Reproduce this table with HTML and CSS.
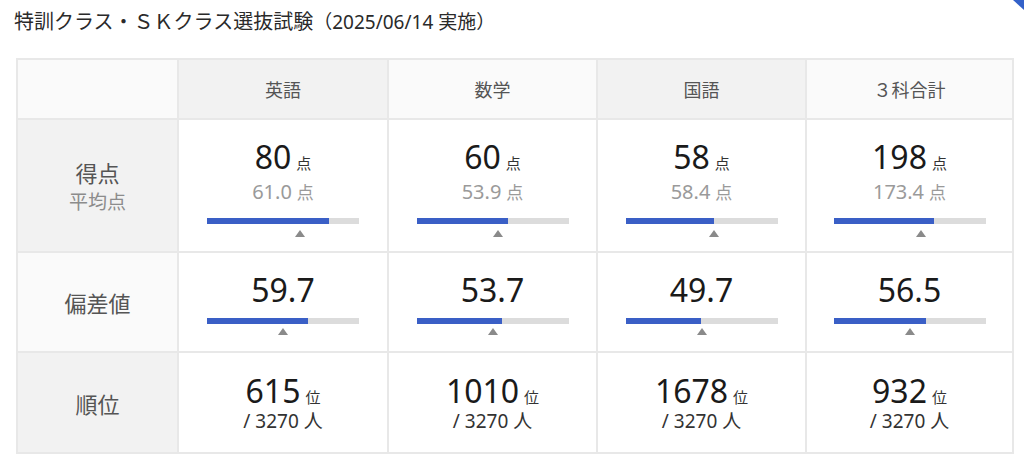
FILE: index.html
```html
<!DOCTYPE html>
<html lang="ja">
<head>
<meta charset="utf-8">
<title>選抜試験 結果</title>
<link rel="stylesheet" href="styles.css">
</head>
<body>
<div class="page">
  <svg class="corner-mark" width="12" height="12" viewBox="0 0 12 12"><polygon points="1,0 12,0 12,10" fill="#3361c9"/></svg>
  <h1 class="title">特訓クラス・ＳＫクラス選抜試験<span class="date">（2025/06/14 実施）</span></h1>
  <div class="grid">
    <div class="hd light"></div>
    <div class="hd dark">英語</div>
    <div class="hd light">数学</div>
    <div class="hd dark">国語</div>
    <div class="hd light">３科合計</div>

    <div class="lbl dark"><div class="lbl-main">得点</div><div class="lbl-sub">平均点</div></div>
    <div class="cell score">
      <div class="big">80<span class="unit">点</span></div>
      <div class="avg">61.0<span class="unit2">点</span></div>
      <div class="bar"><div class="fill" style="width:80%"></div></div>
      <div class="mk"><span class="tri" style="left:61%"></span></div>
    </div>
    <div class="cell score">
      <div class="big">60<span class="unit">点</span></div>
      <div class="avg">53.9<span class="unit2">点</span></div>
      <div class="bar"><div class="fill" style="width:60%"></div></div>
      <div class="mk"><span class="tri" style="left:53.9%"></span></div>
    </div>
    <div class="cell score">
      <div class="big">58<span class="unit">点</span></div>
      <div class="avg">58.4<span class="unit2">点</span></div>
      <div class="bar"><div class="fill" style="width:58%"></div></div>
      <div class="mk"><span class="tri" style="left:58.4%"></span></div>
    </div>
    <div class="cell score">
      <div class="big">198<span class="unit">点</span></div>
      <div class="avg">173.4<span class="unit2">点</span></div>
      <div class="bar"><div class="fill" style="width:66%"></div></div>
      <div class="mk"><span class="tri" style="left:57.8%"></span></div>
    </div>

    <div class="lbl light"><div class="lbl-main">偏差値</div></div>
    <div class="cell dev">
      <div class="big">59.7</div>
      <div class="bar"><div class="fill" style="width:66.2%"></div></div>
      <div class="mk"><span class="tri" style="left:50%"></span></div>
    </div>
    <div class="cell dev">
      <div class="big">53.7</div>
      <div class="bar"><div class="fill" style="width:56.2%"></div></div>
      <div class="mk"><span class="tri" style="left:50%"></span></div>
    </div>
    <div class="cell dev">
      <div class="big">49.7</div>
      <div class="bar"><div class="fill" style="width:49.5%"></div></div>
      <div class="mk"><span class="tri" style="left:50%"></span></div>
    </div>
    <div class="cell dev">
      <div class="big">56.5</div>
      <div class="bar"><div class="fill" style="width:60.8%"></div></div>
      <div class="mk"><span class="tri" style="left:50%"></span></div>
    </div>

    <div class="lbl dark"><div class="lbl-main">順位</div></div>
    <div class="cell rank">
      <div class="big">615<span class="unit">位</span></div>
      <div class="total">/ 3270 人</div>
    </div>
    <div class="cell rank">
      <div class="big">1010<span class="unit">位</span></div>
      <div class="total">/ 3270 人</div>
    </div>
    <div class="cell rank">
      <div class="big">1678<span class="unit">位</span></div>
      <div class="total">/ 3270 人</div>
    </div>
    <div class="cell rank">
      <div class="big">932<span class="unit">位</span></div>
      <div class="total">/ 3270 人</div>
    </div>
  </div>
</div>
</body>
</html>
```

FILE: styles.css
```css
html, body {
  margin: 0;
  padding: 0;
  background: #ffffff;
}
body {
  font-family: "Noto Sans", "Noto Sans CJK JP", sans-serif;
  color: #333333;
}
.page {
  position: relative;
  width: 1024px;
  height: 471px;
  overflow: hidden;
}
.corner-mark {
  position: absolute;
  top: 0;
  right: 0;
}
.title {
  margin: 0;
  box-sizing: border-box;
  height: 58px;
  padding: 9px 0 0 14px;
  font-size: 20px;
  line-height: 24px;
  font-weight: normal;
  color: #2a2a2a;
  font-family: "Noto Sans CJK JP", sans-serif;
}
.date {
  font-size: 19px;
  line-height: 19px;
  font-family: "Noto Sans", "Noto Sans CJK JP", sans-serif;
}
.grid {
  margin-left: 16px;
  width: 998px;
  box-sizing: border-box;
  display: grid;
  grid-template-columns: 159px 208px 207px 207px 205px;
  grid-template-rows: 58px 131px 98px 99px;
  gap: 2px;
  padding: 2px;
  background: #e8e8e8;
}
.light { background: #fafafa; }
.dark { background: #f2f2f2; }
.hd {
  display: flex;
  align-items: center;
  justify-content: center;
  font-family: "Noto Sans CJK JP", sans-serif;
  font-size: 18px;
  color: #555555;
}
.lbl {
  display: flex;
  flex-direction: column;
  align-items: center;
  justify-content: center;
  font-family: "Noto Sans CJK JP", sans-serif;
  color: #555555;
}
.lbl-main {
  font-size: 22px;
  line-height: 26px;
}
.lbl-sub {
  font-size: 19px;
  line-height: 24px;
  margin-top: 4px;
  color: #8c8c8c;
}
.cell {
  background: #ffffff;
  display: flex;
  flex-direction: column;
  align-items: center;
  text-align: center;
}
.big {
  font-size: 32px;
  line-height: 32px;
  color: #1a1a1a;
}
.unit {
  font-size: 15px;
  line-height: 15px;
  margin-left: 5px;
  color: #333333;
  font-family: "Noto Sans CJK JP", sans-serif;
}
.avg {
  margin-top: 7px;
  font-size: 20px;
  line-height: 24px;
  color: #9a9a9a;
}
.unit2 {
  font-size: 17px;
  line-height: 17px;
  margin-left: 5px;
  font-family: "Noto Sans CJK JP", sans-serif;
}
.bar {
  width: 152px;
  height: 6px;
  background: #dcdcdc;
}
.fill {
  height: 100%;
  background: #3a5fc6;
}
.mk {
  position: relative;
  width: 152px;
  height: 7px;
}
.tri {
  position: absolute;
  top: 0;
  width: 0;
  height: 0;
  margin-left: -5px;
  border-left: 5px solid transparent;
  border-right: 5px solid transparent;
  border-bottom: 7px solid #8a8a8a;
}
.score { padding-top: 21px; }
.score .bar { margin-top: 14px; }
.score .mk { margin-top: 6px; }
.dev { padding-top: 21px; }
.dev .bar { margin-top: 12px; }
.dev .mk { margin-top: 4px; }
.rank { padding-top: 22px; }
.total {
  margin-top: 3px;
  font-size: 19px;
  line-height: 22px;
  color: #333333;
}
```
